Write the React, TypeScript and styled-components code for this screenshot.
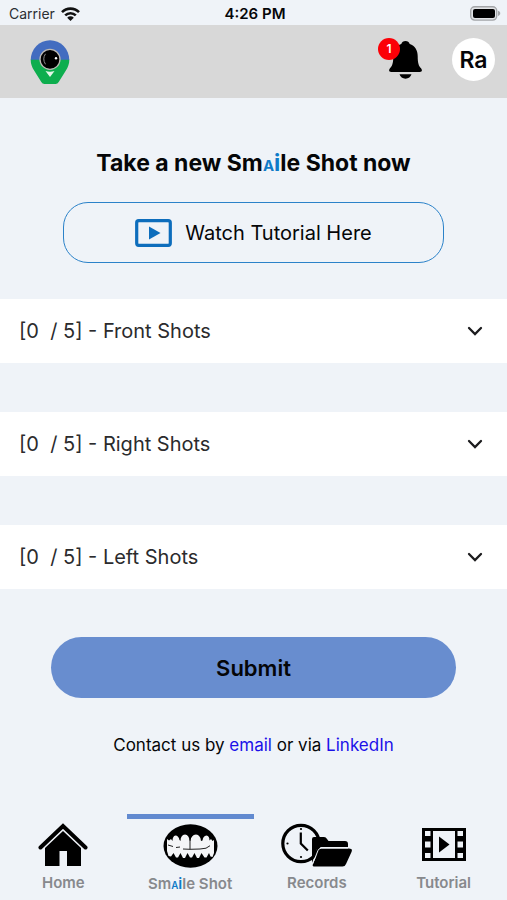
import React, { useState } from "react";
import styled, { createGlobalStyle } from "styled-components";

const GlobalStyle = createGlobalStyle`
  *, *::before, *::after { box-sizing: border-box; }
  body {
    margin: 0;
    background: #eff3f8;
    color: #050608;
    font-family: Inter, "Liberation Sans", sans-serif;
  }
  button { font: inherit; color: inherit; border: 0; padding: 0; background: none; cursor: pointer; }
  svg { display: block; flex: none; }
`;

const Screen = styled.div`
  display: flex;
  flex-direction: column;
  min-height: 100vh;
`;

const StatusBar = styled.div`
  display: grid;
  grid-template-columns: 1fr auto 1fr;
  align-items: center;
  height: 25px;
  padding: 2px 6px 0 9px;
  font-size: 14px;
  line-height: 20px;
`;

const Carrier = styled.span`
  display: flex;
  align-items: center;
  gap: 6px;
  color: #2b2e33;
`;

const Clock = styled.time`
  font-size: 15px;
  font-weight: 600;
`;

const BatterySlot = styled.span`
  justify-self: end;
`;

const Header = styled.header`
  display: flex;
  align-items: center;
  justify-content: space-between;
  height: 73px;
  padding: 0 12px 0 30px;
  background: #d8d8d8;
`;

const HeaderActions = styled.div`
  display: flex;
  align-items: center;
  gap: 30px;
  margin-bottom: 4px;
`;

const BellButton = styled.button`
  position: relative;
`;

const Badge = styled.span`
  position: absolute;
  top: -3px;
  left: -11px;
  width: 22px;
  height: 22px;
  border-radius: 50%;
  background: #fb0007;
  color: #fff;
  font-size: 12px;
  font-weight: 600;
  line-height: 22px;
  text-align: center;
`;

const Avatar = styled.button`
  width: 43px;
  height: 43px;
  border-radius: 50%;
  && { background: #fff; }
  && { font-size: 23px; font-weight: 600; }
`;

const Main = styled.main`
  display: flex;
  flex-direction: column;
  align-items: center;
`;

const Title = styled.h1`
  margin: 49px 0 22px;
  font-size: 23px;
  font-weight: 700;
  line-height: 33px;
`;

const BrandI = styled.span`
  color: #0f7bc8;
`;

const BrandA = styled(BrandI)`
  font-size: 0.65em;
  line-height: 1;
`;

const TutorialButton = styled.button`
  display: flex;
  align-items: center;
  justify-content: center;
  gap: 13px;
  width: 75%;
  height: 61px;
  && {
    border: 1px solid #2b82c9;
    font-size: 20px;
  }
  border-radius: 25px;
`;

const Sections = styled.div`
  display: flex;
  flex-direction: column;
  gap: 49px;
  align-self: stretch;
  margin: 36px 0 48px;
`;

const SectionToggle = styled.button`
  display: flex;
  align-items: center;
  justify-content: space-between;
  width: 100%;
  height: 64px;
  && {
    padding: 0 20px 0 19px;
    background: #fff;
    color: #2b2b2d;
    font-size: 20px;
  }
  white-space: pre;
`;

const Submit = styled.button`
  width: 80%;
  height: 61px;
  border-radius: 31px;
  && {
    background: #688dcf;
    font-size: 22px;
    font-weight: 600;
  }
`;

const Contact = styled.p`
  margin: 35px 0 24px;
  font-size: 17px;
  line-height: 24px;
`;

const ContactLink = styled.a`
  color: #1b10e8;
  text-decoration: none;
`;

const TabBar = styled.nav`
  display: grid;
  grid-template-columns: repeat(4, 1fr);
  margin-top: auto;
`;

const Tab = styled.a<{ $active?: boolean }>`
  display: flex;
  flex-direction: column;
  align-items: center;
  height: 86px;
  padding-top: ${(p) => (p.$active ? 1 : 0)}px;
  border-top: 5px solid ${(p) => (p.$active ? "#628ad0" : "transparent")};
  color: #87898d;
  font-size: 15px;
  font-weight: 600;
  line-height: 20px;
  text-decoration: none;
`;

const TabIcon = styled.span`
  display: flex;
  align-items: center;
  height: 54px;
  padding-bottom: 3px;
  color: #000;
`;

const Wifi = () => (
  <svg width="19" height="14" viewBox="0 0 19 14" aria-hidden="true">
    <g fill="none" stroke="#111" strokeWidth="2.6">
      <path d="M1 5.2a12 12 0 0 1 17 0" />
      <path d="M4.2 8.4a7.5 7.5 0 0 1 10.6 0" />
    </g>
    <path d="M9.5 14 6.2 10.7a4.7 4.7 0 0 1 6.6 0Z" fill="#111" />
  </svg>
);

const Battery = () => (
  <svg width="31" height="15" viewBox="0 0 31 15" aria-hidden="true">
    <rect x="0.7" y="0.7" width="26" height="13.4" rx="4" fill="#e2e4e7" stroke="#a3a5a8" strokeWidth="1.4" />
    <rect x="3" y="3" width="22" height="9" rx="2" fill="#000" />
    <path d="M28 4.8c3 1 3 4.2 0 5.2Z" fill="#a3a5a8" />
  </svg>
);

const Logo = () => (
  <svg width="40" height="44" viewBox="0 0 40 44" role="img" aria-label="Smaile">
    <path d="M.7 20a19.3 19.7 0 0 1 38.6 0Z" fill="#426cc0" />
    <path d="M.7 19.7h38.6c0 4-1.2 7.3-3.4 10.7L28.7 42Q27.7 44 25.5 44h-11Q12.3 44 11.3 42L4.1 30.4C1.9 27 .7 23.7.7 19.7Z" fill="#0dae4e" />
    <circle cx="20" cy="19.3" r="10" fill="#000" stroke="#bcb9b5" strokeWidth="1.3" />
    <path d="M15.5 13.8q-3.5 5 0 10.5" fill="none" stroke="#8c8c8c" strokeWidth="1" />
    <circle cx="26" cy="18.3" r="1.2" fill="#fff" />
    <path d="M15.5 31q4.5 1.5 9 0L20 37Z" fill="#e4f6e8" />
  </svg>
);

const Bell = () => (
  <svg width="33" height="38" viewBox="0 0 33 38" aria-hidden="true">
    <path d="M16.5 0c2.1 0 3.7 1.2 4.2 3 5.3 1.8 8 6.2 8 12.2 0 7 1 9.8 3.5 12.3 1.3 1.6.8 3.5-1.4 3.5H2.2C0 31-.5 29.1.8 27.5 3.3 25 4.3 22.2 4.3 15.2c0-6 2.7-10.4 8-12.2.5-1.8 2.1-3 4.2-3Z" />
    <path d="M10.5 33.3h12c-.8 2.8-3 4.4-6 4.4s-5.2-1.600-6-4.400Z" />
  </svg>
);

const VideoIcon = () => (
  <svg width="37" height="28" viewBox="0 0 37 28" aria-hidden="true">
    <rect x="1.7" y="1.7" width="33.6" height="24.6" rx="2" fill="none" stroke="#0d6dbc" strokeWidth="3.2" />
    <path d="M14 7.5 25.5 14 14 20.5Z" fill="#0d6dbc" />
  </svg>
);

const Chevron = () => (
  <svg width="24" height="24" viewBox="0 0 24 24" aria-hidden="true">
    <path d="m6 9 6 6 6-6" fill="none" stroke="#1c1c1e" strokeWidth="2.3" strokeLinecap="round" />
  </svg>
);

const HomeIcon = () => (
  <svg width="50" height="44" viewBox="0 0 50 44" aria-hidden="true">
    <path d="M2.500 24.500 25 3l22.500 21.500" fill="none" stroke="currentColor" strokeWidth="4" strokeLinecap="round" />
    <path d="M7 25 25 8l18 17v18H29V28h-7.500v15H7Z" fill="currentColor" />
  </svg>
);

const TeethIcon = () => (
  <svg width="55" height="44" viewBox="0 0 55 44" aria-hidden="true">
    <ellipse cx="27.500" cy="22" rx="27" ry="21.700" fill="currentColor" />
    <path
      d="M4 15l2 1.500L8 15l1.500 2q0-5 3-5.500 3 0 4 4.500l1 1q0-6 4.500-6.500 4 .5 4.500 6l1 .5q.5-6 5.500-6.500 4.500.5 5 6.500l1.500-.5q.5-4.500 4-5 3 .5 3 5l1.500-1.500 1.500 2 1.500-1V29l-1.500 4-2-.5-1.500-3.500-2.500 4.500h-2L38.500 29 36 34h-2l-2.500-5-2.500 4.500h-2L24.500 29 22 34h-2l-2.500-5-2.500 4.500h-2L10.500 29 8 32.500 5.500 32 4 27Z"
      fill="#f4f5f7"
    />
    <path d="m5 21 5 1.500M13 23.500l4-.5M20 25l7 .3V15M27 25.300 37 25l6-.8 4-2.500" fill="none" stroke="#222" strokeWidth="1" />
  </svg>
);

const RecordsIcon = () => (
  <svg width="71" height="44" viewBox="0 0 71 44" aria-hidden="true">
    <circle cx="20" cy="20.500" r="18.200" fill="none" stroke="currentColor" strokeWidth="3.200" />
    <path d="M19.800 9.500v11l7 7" fill="none" stroke="currentColor" strokeWidth="2.200" />
    <g fill="currentColor">
      <circle cx="20" cy="6" r="1.100" />
      <circle cx="6.500" cy="20.500" r="1.100" />
      <circle cx="20" cy="34" r="1.100" />
      <path d="M31 40V16q0-2 2-2h10q2 0 3 2l1.500 2H64q3 0 3 3v3H39q-2 0-3 2Z" />
      <path d="M40.500 25.500H68q4 0 2.500 3.500L65 41q-1 2.500-3.500 2.500H33Q31 43.500 32 41l5.500-13q1-2.500 3-2.500Z" />
    </g>
    <path d="m31.500 41 5.500-13.500q1-2.500 3.500-2.500H67" fill="none" stroke="#eff3f8" strokeWidth="1" />
  </svg>
);

const FilmIcon = () => (
  <svg width="44" height="33" viewBox="0 0 44 33" aria-hidden="true">
    <path
      fill="currentColor"
      fillRule="evenodd"
      d="M0 0h44v33H0ZM3 3v5h5.500V3Zm0 10.500v6h5.500v-6ZM3 25v5h5.500v-5ZM35.500 3v5H41V3Zm0 10.500v6H41v-6Zm0 11.500v5H41v-5ZM11 3v27h22V3Z"
    />
    <path d="M17 8.500 27.500 16.500 17 24.500Z" fill="currentColor" />
  </svg>
);

const BrandWord = () => (
  <>
    Sm<BrandA>A</BrandA><BrandI>i</BrandI>le
  </>
);

const shots = ["Front", "Right", "Left"];

const tabs = [
  { id: "home", label: "Home", icon: <HomeIcon /> },
  { id: "shot", label: <span><BrandWord /> Shot</span>, icon: <TeethIcon /> },
  { id: "records", label: "Records", icon: <RecordsIcon /> },
  { id: "tutorial", label: "Tutorial", icon: <FilmIcon /> },
];

export default function App() {
  const [active, setActive] = useState("shot");

  return (
    <Screen>
      <GlobalStyle />
      <StatusBar>
        <Carrier>Carrier <Wifi /></Carrier>
        <Clock>4:26 PM</Clock>
        <BatterySlot><Battery /></BatterySlot>
      </StatusBar>
      <Header>
        <Logo />
        <HeaderActions>
          <BellButton type="button" aria-label="Notifications">
            <Bell />
            <Badge>1</Badge>
          </BellButton>
          <Avatar type="button">Ra</Avatar>
        </HeaderActions>
      </Header>
      <Main>
        <Title>Take a new <BrandWord /> Shot now</Title>
        <TutorialButton type="button">
          <VideoIcon />
          Watch Tutorial Here
        </TutorialButton>
        <Sections>
          {shots.map((side) => (
            <SectionToggle key={side} type="button" aria-expanded={false}>
              <span>{`[0  / 5] - ${side} Shots`}</span>
              <Chevron />
            </SectionToggle>
          ))}
        </Sections>
        <Submit type="button">Submit</Submit>
        <Contact>
          Contact us by <ContactLink href="#email">email</ContactLink> or via{" "}
          <ContactLink href="#linkedin">LinkedIn</ContactLink>
        </Contact>
      </Main>
      <TabBar>
        {tabs.map((tab) => (
          <Tab key={tab.id} href={`#${tab.id}`} $active={tab.id === active} onClick={() => setActive(tab.id)}>
            <TabIcon>{tab.icon}</TabIcon>
            {tab.label}
          </Tab>
        ))}
      </TabBar>
    </Screen>
  );
}
